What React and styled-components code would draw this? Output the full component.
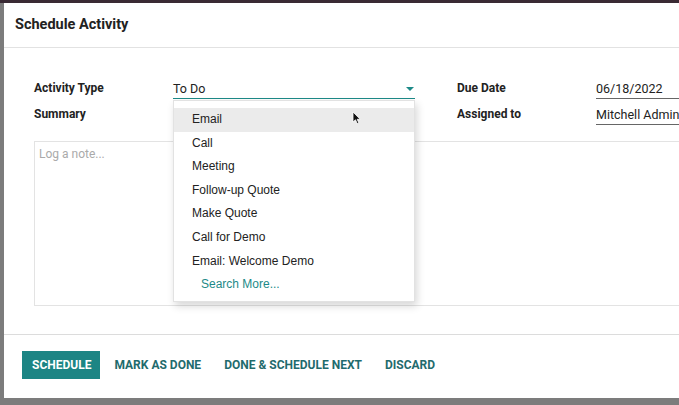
import React from "react";
import styled, { createGlobalStyle } from "styled-components";

const Global = createGlobalStyle`
  html, body {
    margin: 0;
    padding: 0;
    background: #7c7c7c;
  }
  * { box-sizing: border-box; }
`;

const Page = styled.div`
  width: 679px;
  height: 405px;
  overflow: hidden;
  background: #7c7c7c;
  border-top: 3px solid #3a2a34;
  padding-left: 4px;
  font-family: Roboto, "Liberation Sans", sans-serif;
`;

const Modal = styled.div`
  width: 720px;
  background: #fff;
  display: flex;
  flex-direction: column;
`;

const Header = styled.div`
  height: 45px;
  display: flex;
  align-items: center;
  padding: 0 11px 2px;
  border-bottom: 1px solid #e2e2e2;
`;

const Title = styled.h4`
  margin: 0;
  font-size: 14.5px;
  font-weight: 700;
  color: #222;
`;

const Body = styled.div`
  padding: 31px 0 28px 30px;
`;

const Form = styled.div`
  display: flex;
  gap: 42px;
`;

const Group = styled.div`
  display: grid;
  grid-template-columns: 139px ${({ fieldWidth }) => fieldWidth || "1fr"};
  row-gap: 6px;
  flex: ${({ grow }) => (grow ? 1 : "none")};
`;

const Label = styled.div`
  font-size: 12px;
  font-weight: 700;
  color: #222;
  height: 20px;
  line-height: 19px;
`;

const Field = styled.div`
  position: relative;
  height: 20px;
  font-size: 12.5px;
  line-height: 19px;
  color: #222;
  border-bottom: 1px solid ${({ active }) => (active ? "#1d8a88" : "#666")};
  ${({ hidden }) => hidden && `border-bottom-color: transparent;`}
`;

const Caret = styled.span`
  position: absolute;
  right: 1px;
  top: 8px;
  width: 0;
  height: 0;
  border-left: 4px solid transparent;
  border-right: 4px solid transparent;
  border-top: 4px solid #1d8a88;
`;

const Menu = styled.ul`
  position: absolute;
  top: 21px;
  left: 0;
  width: 242px;
  margin: 0;
  padding: 7px 0 4px;
  list-style: none;
  background: #fff;
  border: 1px solid #e2e2e2;
  box-shadow: 2px 4px 8px rgba(0, 0, 0, 0.16);
  z-index: 5;
  font-family: "Liberation Sans", Arial, sans-serif;
`;

const Item = styled.li`
  height: 23.6px;
  line-height: 23.6px;
  padding-left: ${({ more }) => (more ? "27px" : "18px")};
  font-size: 12px;
  color: ${({ more }) => (more ? "#1d8a88" : "#222")};
  background: ${({ selected }) => (selected ? "#ebebeb" : "transparent")};
`;

const Cursor = styled.svg`
  position: absolute;
  left: 178px;
  top: 10px;
`;

const Note = styled.div`
  margin-top: 16px;
  height: 165px;
  border: 1px solid #e3e3e3;
  border-right: none;
  padding: 5px 4px;
  font-size: 12px;
  color: #aaa;
`;

const Footer = styled.div`
  border-top: 1px solid #dcdcdc;
  padding: 16px 18px 19px;
  display: flex;
  gap: 4px;
`;

const Button = styled.button`
  height: 28px;
  padding: 0 9px 0 10px;
  border: none;
  font-family: Roboto, "Liberation Sans", sans-serif;
  font-size: 12px;
  font-weight: 700;
  cursor: pointer;
  background: ${({ primary }) => (primary ? "#1c8584" : "transparent")};
  color: ${({ primary }) => (primary ? "#fff" : "#1f6b6d")};
`;

const items = [
  "Email",
  "Call",
  "Meeting",
  "Follow-up Quote",
  "Make Quote",
  "Call for Demo",
  "Email: Welcome Demo",
];

export default function App() {
  return (
    <>
      <Global />
      <Page>
        <Modal>
          <Header>
            <Title>Schedule Activity</Title>
          </Header>
          <Body>
            <Form>
              <Group fieldWidth="242px">
                <Label>Activity Type</Label>
                <Field active>
                  To Do
                  <Caret />
                  <Menu>
                    {items.map((it, i) => (
                      <Item key={it} selected={i === 0}>
                        {it}
                      </Item>
                    ))}
                    <Item more>Search More...</Item>
                    <Cursor width="9" height="14" viewBox="0 0 9 14">
                      <path
                        d="M1 1 L1 11 L3.5 8.8 L5.2 12.6 L6.8 11.9 L5.2 8.3 L8.2 8.3 Z"
                        fill="#111"
                        stroke="#fff"
                        strokeWidth="0.8"
                      />
                    </Cursor>
                  </Menu>
                </Field>
                <Label>Summary</Label>
                <Field hidden />
              </Group>
              <Group grow>
                <Label>Due Date</Label>
                <Field>06/18/2022</Field>
                <Label>Assigned to</Label>
                <Field>Mitchell Admin</Field>
              </Group>
            </Form>
            <Note>Log a note...</Note>
          </Body>
          <Footer>
            <Button primary>SCHEDULE</Button>
            <Button>MARK AS DONE</Button>
            <Button>DONE &amp; SCHEDULE NEXT</Button>
            <Button>DISCARD</Button>
          </Footer>
        </Modal>
      </Page>
    </>
  );
}
